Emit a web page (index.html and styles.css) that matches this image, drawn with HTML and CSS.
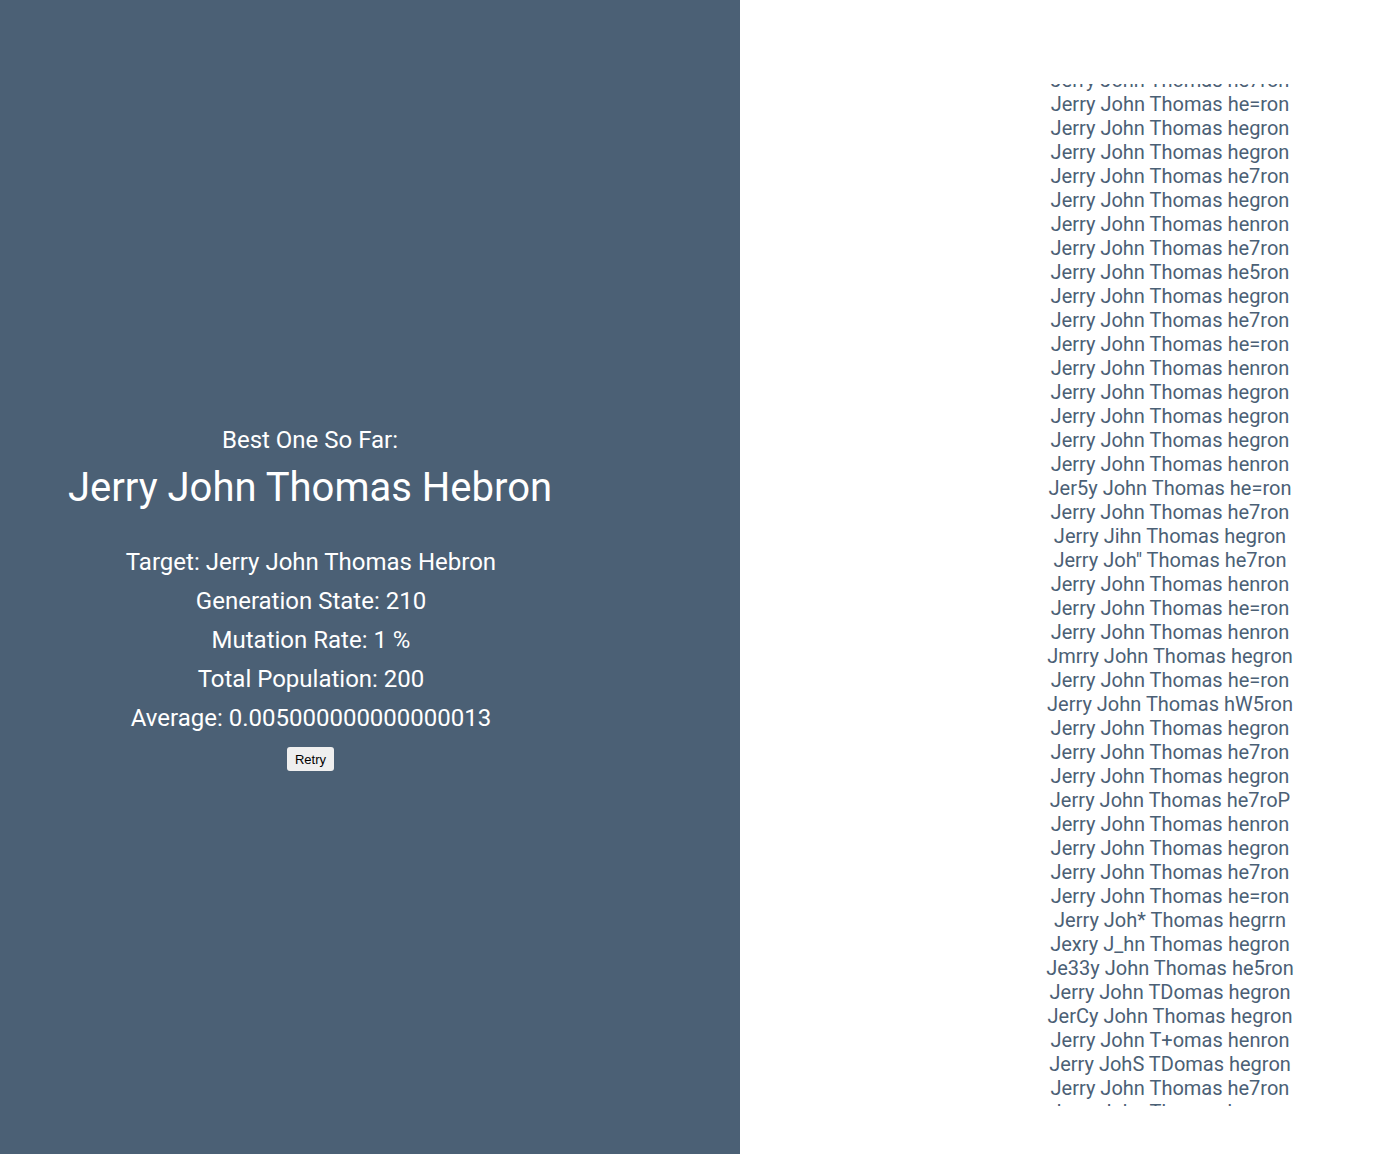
FILE: index.html
```html
<!DOCTYPE html>
<html>
<head>
<meta charset="utf-8">
<link rel="stylesheet" href="styles.css">
</head>
<body>
<div class="app">
  <section class="panel">
    <div class="panel-inner">
      <div class="label">Best One So Far:</div>
      <div class="best">Jerry John Thomas Hebron</div>
      <ul class="stats">
        <li>Target: Jerry John Thomas Hebron</li>
        <li>Generation State: 210</li>
        <li>Mutation Rate: 1 %</li>
        <li>Total Population: 200</li>
        <li>Average: 0.005000000000000013</li>
      </ul>
      <button class="retry">Retry</button>
    </div>
  </section>
  <section class="results">
    <div class="scroller">
      <ul class="phrases">
        <li>Jerry John Thomas he7ron</li>
        <li>Jerry John Thomas he=ron</li>
        <li>Jerry John Thomas hegron</li>
        <li>Jerry John Thomas hegron</li>
        <li>Jerry John Thomas he7ron</li>
        <li>Jerry John Thomas hegron</li>
        <li>Jerry John Thomas henron</li>
        <li>Jerry John Thomas he7ron</li>
        <li>Jerry John Thomas he5ron</li>
        <li>Jerry John Thomas hegron</li>
        <li>Jerry John Thomas he7ron</li>
        <li>Jerry John Thomas he=ron</li>
        <li>Jerry John Thomas henron</li>
        <li>Jerry John Thomas hegron</li>
        <li>Jerry John Thomas hegron</li>
        <li>Jerry John Thomas hegron</li>
        <li>Jerry John Thomas henron</li>
        <li>Jer5y John Thomas he=ron</li>
        <li>Jerry John Thomas he7ron</li>
        <li>Jerry Jihn Thomas hegron</li>
        <li>Jerry Joh" Thomas he7ron</li>
        <li>Jerry John Thomas henron</li>
        <li>Jerry John Thomas he=ron</li>
        <li>Jerry John Thomas henron</li>
        <li>Jmrry John Thomas hegron</li>
        <li>Jerry John Thomas he=ron</li>
        <li>Jerry John Thomas hW5ron</li>
        <li>Jerry John Thomas hegron</li>
        <li>Jerry John Thomas he7ron</li>
        <li>Jerry John Thomas hegron</li>
        <li>Jerry John Thomas he7roP</li>
        <li>Jerry John Thomas henron</li>
        <li>Jerry John Thomas hegron</li>
        <li>Jerry John Thomas he7ron</li>
        <li>Jerry John Thomas he=ron</li>
        <li>Jerry Joh* Thomas hegrrn</li>
        <li>Jexry J_hn Thomas hegron</li>
        <li>Je33y John Thomas he5ron</li>
        <li>Jerry John TDomas hegron</li>
        <li>JerCy John Thomas hegron</li>
        <li>Jerry John T+omas henron</li>
        <li>Jerry JohS TDomas hegron</li>
        <li>Jerry John Thomas he7ron</li>
        <li>Jerry John Thomas hegron</li>
      </ul>
    </div>
  </section>
</div>
</body>
</html>
```
FILE: styles.css
```css
html, body {
  margin: 0;
  padding: 0;
  height: 100%;
}
body {
  font-family: Roboto, "Noto Sans", sans-serif;
  background: #ffffff;
}
.app {
  display: flex;
  height: 1154px;
}
.panel {
  width: 740px;
  flex: 0 0 740px;
  background: #4b6075;
  color: #ffffff;
}
.panel-inner {
  width: 620px;
  padding-top: 426px;
  display: flex;
  flex-direction: column;
  align-items: center;
  text-align: center;
}
.label {
  font-size: 24px;
  line-height: 28px;
}
.best {
  font-size: 40px;
  line-height: 48px;
  margin-top: 10px;
}
.stats {
  list-style: none;
  margin: 31px 0 0;
  padding: 0 0 0 2px;
  font-size: 24px;
  line-height: 39px;
}
.retry {
  margin-top: 9px;
  margin-left: 1px;
  font-family: Arial, "Liberation Sans", sans-serif;
  font-size: 13px;
  color: #000;
  background: #efefef;
  border: none;
  border-radius: 3px;
  height: 24px;
  padding: 0 8px;
}
.results {
  flex: 1;
  display: flex;
  justify-content: flex-start;
  padding-top: 84px;
}
.scroller {
  margin-left: 290px;
  width: 280px;
  height: 1022px;
  overflow: hidden;
}
.phrases {
  list-style: none;
  margin: -16px 0 0;
  padding: 0;
  text-align: center;
  font-size: 20px;
  line-height: 24px;
  color: #4b6075;
}
```
